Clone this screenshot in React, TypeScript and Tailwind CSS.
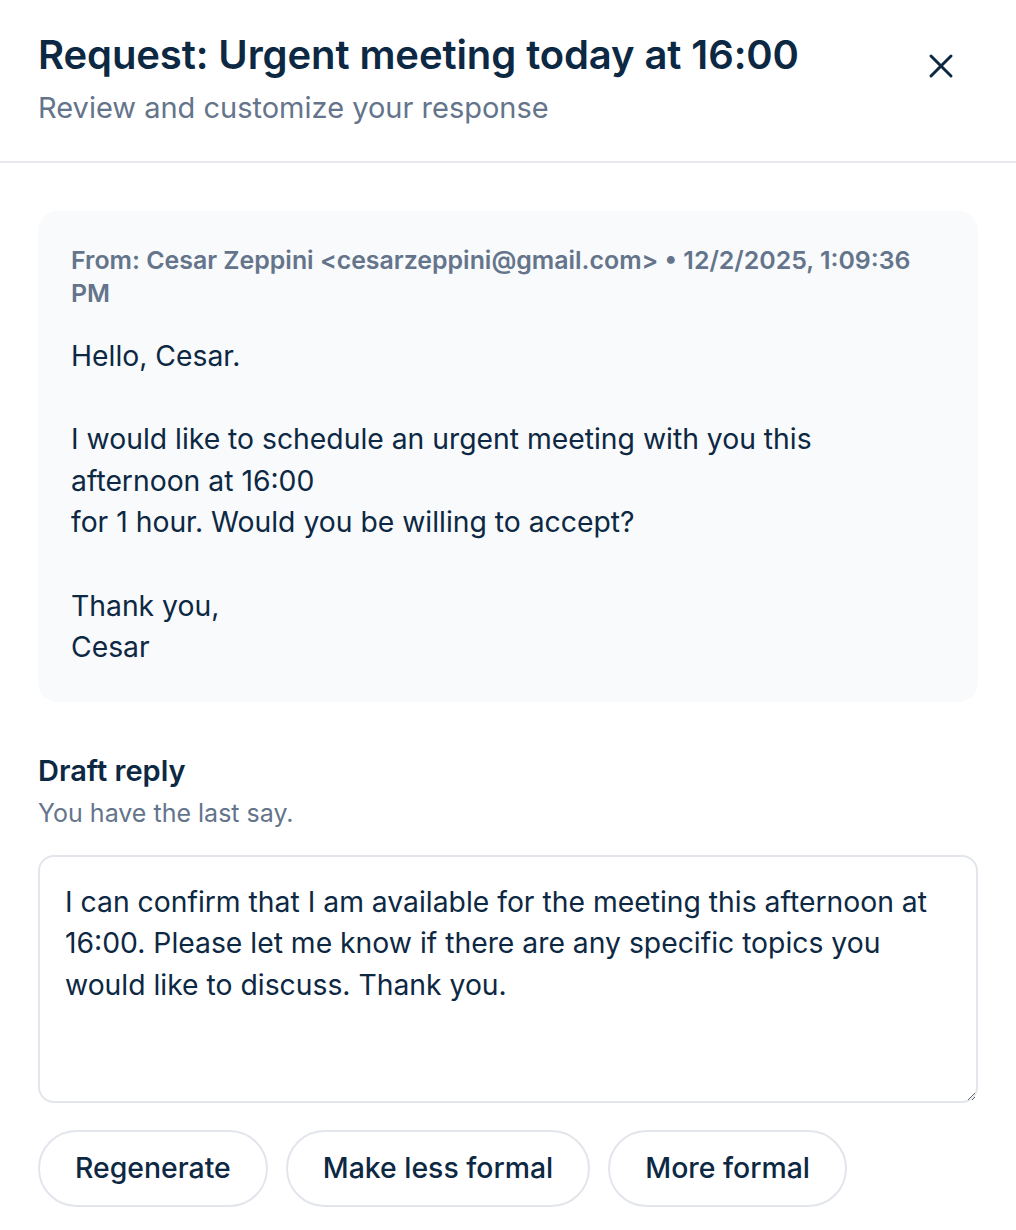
import React from "react";

const font = { fontFamily: "Inter, 'Noto Sans', sans-serif" };

export default function App() {
  return (
    <div className="w-[1016px] min-h-[1230px] bg-white text-[#0d2843]" style={font}>
      <div className="flex items-start justify-between border-b-2 border-[#e6e8ee] pl-[38px] pr-[60px] pt-[31px] pb-[33px]">
        <div className="flex flex-col">
          <h1 className="text-[40px] leading-[48px] font-semibold tracking-[-0.1px]">
            Request: Urgent meeting today at 16:00
          </h1>
          <p className="mt-[9px] text-[29px] leading-[40px] text-[#64748b]">
            Review and customize your response
          </p>
        </div>
        <button className="mt-[20px] text-[#0d2843]">
          <svg width="30" height="30" viewBox="0 0 24 24" fill="none" stroke="currentColor" strokeWidth="2.4" strokeLinecap="round">
            <path d="M4 4 L20 20" />
            <path d="M20 4 L4 20" />
          </svg>
        </button>
      </div>

      <div className="px-[38px] pt-[48px] pb-[22px] flex flex-col">
        <div className="rounded-[20px] bg-[#f8fafc] px-[33px] pt-[33px] pb-[33px]">
          <p className="text-[24.9px] leading-[33px] font-semibold text-[#64748b]">
            From: Cesar Zeppini &lt;cesarzeppini@gmail.com&gt; • 12/2/2025, 1:09:36 PM
          </p>
          <p className="mt-[26px] text-[28.3px] leading-[41.6px] whitespace-pre-line">
            {"Hello, Cesar.\n\nI would like to schedule an urgent meeting with you this afternoon at 16:00\nfor 1 hour. Would you be willing to accept?\n\nThank you,\nCesar"}
          </p>
        </div>

        <h2 className="mt-[49px] text-[29px] leading-[40px] font-semibold">Draft reply</h2>
        <p className="mt-[5px] text-[25px] leading-[34px] text-[#64748b]">You have the last say.</p>

        <textarea
          className="mt-[25px] h-[248px] w-full resize-y rounded-[16px] border-2 border-[#e2e5eb] px-[25px] pt-[25px] text-[28.3px] leading-[41.5px] text-[#0d2843] outline-none"
          style={font}
          defaultValue="I can confirm that I am available for the meeting this afternoon at 16:00. Please let me know if there are any specific topics you would like to discuss. Thank you."
        />

        <div className="mt-[27px] flex gap-[18px]">
          {["Regenerate", "Make less formal", "More formal"].map((t) => (
            <button
              key={t}
              className="h-[77px] rounded-full border-2 border-[#e2e5eb] bg-white px-[35px] text-[28.4px] font-medium text-[#0d2843]"
            >
              {t}
            </button>
          ))}
        </div>
      </div>
    </div>
  );
}
